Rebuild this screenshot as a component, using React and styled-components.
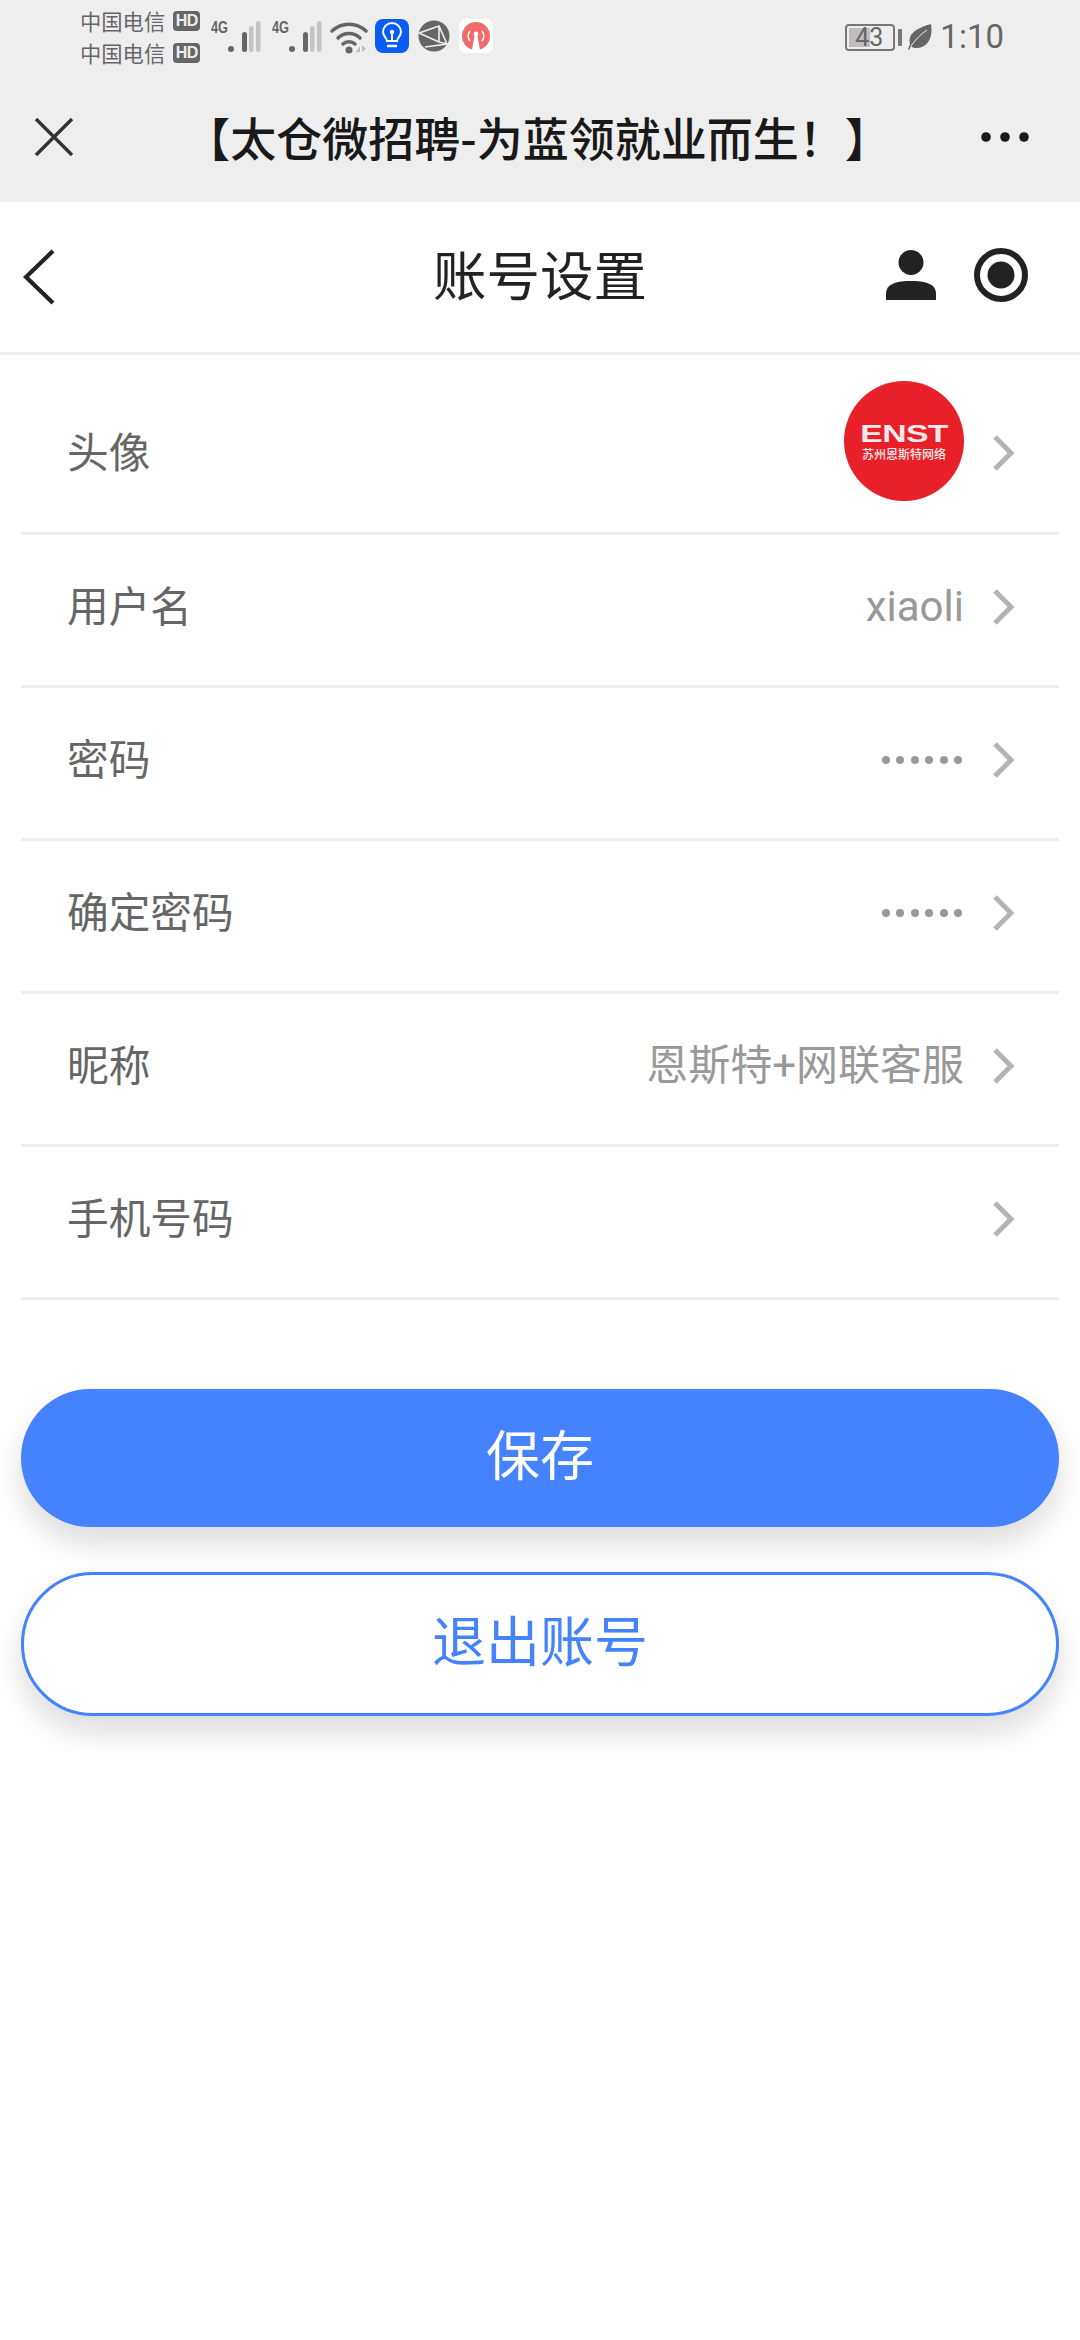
import styled, { createGlobalStyle } from "styled-components";

const CJK = `"Noto Sans CJK SC", "Noto Sans", sans-serif`;
const BLUE = "#4483fd";

const GlobalStyle = createGlobalStyle`
  html, body {
    margin: 0;
    padding: 0;
    background: #ffffff;
  }
  body {
    font-family: Roboto, ${CJK};
  }
  * {
    box-sizing: border-box;
  }
`;

const Page = styled.div`
  width: 1080px;
  height: 2340px;
  background: #ffffff;
  overflow: hidden;
`;

const Top = styled.div`
  height: 202px;
  background: #eeeeee;
`;

const StatusBar = styled.div`
  height: 70px;
  padding: 6px 76px 0 80px;
  display: flex;
  align-items: flex-start;
  justify-content: space-between;
  color: #666666;
`;

const StatusLeft = styled.div`
  display: flex;
  align-items: flex-start;
`;

const Carriers = styled.div`
  width: 131px;
  display: flex;
  flex-direction: column;
  gap: 2px;
`;

const Carrier = styled.div`
  height: 30px;
  display: flex;
  align-items: center;
  gap: 8px;
  font-family: ${CJK};
  font-size: 21.3px;
  line-height: 30px;
  white-space: nowrap;
`;

const HdBadge = styled.span`
  width: 27px;
  height: 20px;
  border-radius: 4px;
  background: #666666;
  color: #eeeeee;
  font-family: "Liberation Sans", sans-serif;
  font-size: 16px;
  font-weight: 700;
  line-height: 20px;
  text-align: center;
  letter-spacing: -0.5px;
`;

const Signal = styled.div`
  width: 50px;
  margin-left: ${(p) => p.$left}px;
  margin-top: 15px;
  height: 34px;
  display: flex;
  position: relative;
`;

const SignalLabel = styled.span`
  font-family: "Liberation Sans", sans-serif;
  font-weight: 700;
  font-size: 16px;
  line-height: 14px;
  transform: scaleX(0.8);
  transform-origin: left top;
  color: #666666;
`;

const SignalBars = styled.svg`
  position: absolute;
  right: 0;
  top: 0;
`;

const TrayIcon = styled.svg`
  display: block;
  flex: none;
  margin-left: ${(p) => p.$left}px;
  margin-top: ${(p) => p.$top}px;
`;

const StatusRight = styled.div`
  display: flex;
  align-items: center;
  padding-top: 13px;
`;

const Battery = styled.div`
  width: 50px;
  height: 27px;
  border: 2px solid #777777;
  border-radius: 4px;
  position: relative;
  overflow: hidden;
  font-family: Roboto, sans-serif;
  font-size: 25px;
  line-height: 24px;
  text-align: right;
  padding-right: 10px;
  color: #666666;
  &::before {
    content: "";
    position: absolute;
    left: 2px;
    top: 2px;
    bottom: 2px;
    width: 21px;
    background: #bdbdbd;
    z-index: 0;
  }
`;

const BatteryText = styled.span`
  position: relative;
`;

const BatteryCap = styled.div`
  width: 4px;
  height: 17px;
  border-radius: 1px;
  background: #777777;
  margin-left: 3px;
`;

const Clock = styled.div`
  margin-left: 8px;
  font-size: 33px;
  line-height: 36px;
  color: #666666;
`;

const TitleBar = styled.div`
  height: 132px;
  padding: 6px 51px 0 34px;
  margin-top: -2px;
  display: flex;
  align-items: center;
  justify-content: space-between;
`;

const TitleText = styled.div`
  font-family: ${CJK};
  font-size: 46px;
  line-height: 60px;
  font-weight: 500;
  color: #191919;
  white-space: nowrap;
  margin-left: 20px;
  margin-top: -3px;
`;

const NavBar = styled.div`
  height: 153px;
  border-bottom: 3px solid #eeeeee;
  padding: 0 22px;
  display: grid;
  grid-template-columns: 1fr auto 1fr;
  align-items: center;
`;

const NavTitle = styled.div`
  font-family: ${CJK};
  font-size: 53.5px;
  color: #222222;
  line-height: 72px;
  margin-bottom: 8px;
`;

const NavIcons = styled.div`
  display: flex;
  justify-content: flex-end;
  align-items: center;
  gap: 38px;
  padding-right: 30px;
  margin-bottom: 5px;
`;

const List = styled.div`
  padding: 0 21px;
`;

const Row = styled.div`
  height: ${(p) => p.$height}px;
  border-bottom: 3px solid #eeeeee;
  display: flex;
  align-items: center;
  justify-content: space-between;
  padding: 0 44px 0 46px;
`;

const RowLabel = styled.div`
  font-family: ${CJK};
  font-size: 41.7px;
  color: #666666;
  line-height: 60px;
  margin: ${(p) => p.$margin};
`;

const RowRight = styled.div`
  display: flex;
  align-items: center;
  gap: 27px;
  margin-bottom: ${(p) => p.$lift}px;
`;

const RowValue = styled.div`
  font-family: Roboto, ${CJK};
  font-size: 42px;
  line-height: 60px;
  color: #999999;
`;

const Dots = styled.div`
  display: flex;
  gap: 6.5px;
  padding-right: 2px;
`;

const Dot = styled.i`
  display: block;
  width: 8px;
  height: 8px;
  border-radius: 50%;
  background: #999999;
`;

const Avatar = styled.div`
  width: 120px;
  height: 120px;
  border-radius: 50%;
  background: #e8202a;
  color: #fbe9e9;
  display: flex;
  flex-direction: column;
  align-items: center;
  justify-content: center;
  padding-top: 2px;
`;

const AvatarBrand = styled.div`
  font-family: "Liberation Sans", sans-serif;
  font-size: 27px;
  font-weight: 700;
  line-height: 24px;
  letter-spacing: -0.5px;
  transform: scale(1.25, 0.88);
`;

const AvatarSub = styled.div`
  font-family: ${CJK};
  font-size: 12px;
  font-weight: 500;
  line-height: 16px;
  white-space: nowrap;
`;

const AvatarChevron = styled.div`
  display: flex;
  margin-top: 23px;
`;

const Actions = styled.div`
  padding: 89px 21px 0;
  display: flex;
  flex-direction: column;
  gap: 45px;
`;

const Button = styled.div`
  height: ${(p) => (p.$outline ? 144 : 138)}px;
  border-radius: 72px;
  background: ${(p) => (p.$outline ? "#ffffff" : BLUE)};
  border: ${(p) => (p.$outline ? `3px solid ${BLUE}` : "none")};
  color: ${(p) => (p.$outline ? BLUE : "#ffffff")};
  box-shadow: 0 16px 30px rgba(0, 0, 0, 0.14);
  font-family: ${CJK};
  font-size: 54px;
  padding-bottom: 12px;
  display: flex;
  align-items: center;
  justify-content: center;
`;

const Chevron = () => (
  <svg width="24" height="38" viewBox="0 0 24 38" fill="none">
    <path d="M4 3 L20 19 L4 35" stroke="#b4b4b4" strokeWidth="5" />
  </svg>
);

const SignalIcon = () => (
  <SignalBars width="33" height="34" viewBox="0 0 33 34">
    <circle cx="3" cy="28" r="3" fill="#666" />
    <rect x="14" y="11" width="5" height="20" rx="2.5" fill="#666" />
    <rect x="21" y="5" width="4.5" height="26" rx="2.2" fill="#c4c4c4" />
    <rect x="28" y="0" width="4.5" height="31" rx="2.2" fill="#c4c4c4" />
  </SignalBars>
);

const rows = [
  { label: "用户名", value: "xiaoli" },
  { label: "密码", dots: true },
  { label: "确定密码", dots: true },
  { label: "昵称", value: "恩斯特+网联客服" },
  { label: "手机号码" },
];

const App = () => (
  <Page>
    <GlobalStyle />
    <Top>
      <StatusBar>
        <StatusLeft>
          <Carriers>
            <Carrier>
              中国电信<HdBadge>HD</HdBadge>
            </Carrier>
            <Carrier>
              中国电信<HdBadge>HD</HdBadge>
            </Carrier>
          </Carriers>
          <Signal $left={0}>
            <SignalLabel>4G</SignalLabel>
            <SignalIcon />
          </Signal>
          <Signal $left={11}>
            <SignalLabel>4G</SignalLabel>
            <SignalIcon />
          </Signal>
          <TrayIcon $left={8} $top={15} width="38" height="34" viewBox="0 0 38 34" fill="none">
            <path d="M2 10 C12 1 26 1 36 10" stroke="#666" strokeWidth="3.5" strokeLinecap="round" />
            <path d="M8 17 C14 11 24 11 30 17" stroke="#666" strokeWidth="3.5" strokeLinecap="round" />
            <path d="M13 23 C16 20 22 20 25 23" stroke="#666" strokeWidth="3.5" strokeLinecap="round" />
            <circle cx="19" cy="29" r="3.5" fill="#666" />
            <path d="M26 31 L30 25 V31 Z M32 24 L36 28 L32 31 Z" fill="#bbb" />
          </TrayIcon>
          <TrayIcon $left={7} $top={13} width="34" height="34" viewBox="0 0 34 34" fill="none">
            <rect width="34" height="34" rx="8" fill="#0a5cf5" />
            <path d="M12 22 C12 19 8 17.5 8 13 A9 9 0 0 1 26 13 C26 17.5 22 19 22 22 Z" stroke="#fff" strokeWidth="2" />
            <path d="M13 27 H21" stroke="#fff" strokeWidth="2.4" strokeLinecap="round" />
            <path d="M17 22 V14" stroke="#fff" strokeWidth="2" />
            <circle cx="17" cy="13" r="2.2" fill="#fff" />
          </TrayIcon>
          <TrayIcon $left={9} $top={14} width="32" height="32" viewBox="0 0 32 32" fill="none">
            <circle cx="16" cy="16" r="15.5" fill="#666" />
            <path d="M1 13 L21 6 L29 24 L7 27 M1 13 L21 22 M21 6 L21 22 L29 24" stroke="#eee" strokeWidth="1.6" />
          </TrayIcon>
          <TrayIcon $left={9} $top={13} width="34" height="34" viewBox="0 0 34 34" fill="none">
            <rect width="34" height="34" rx="7" fill="#fff" />
            <circle cx="17" cy="17" r="14" fill="#f26a6a" />
            <path d="M11 22 A8 8 0 0 1 11 12 M23 22 A8 8 0 0 0 23 12" stroke="#fff" strokeWidth="1.6" />
            <circle cx="17" cy="15" r="2.4" fill="#fff" />
            <path d="M15.5 17 H18.5 L21 31 H13 Z" fill="#fff" />
          </TrayIcon>
        </StatusLeft>
        <StatusRight>
          <Battery>
            <BatteryText>43</BatteryText>
          </Battery>
          <BatteryCap />
          <TrayIcon $left={6} $top={0} width="24" height="26" viewBox="0 0 24 26">
            <path d="M23 0 C25 12 21 24 8 24 C6 24 4 23.5 3 22 L1 26 L0 25 L2 20 C-1 9 10 4 23 0 Z" fill="#666" />
            <path d="M3 22 C8 15 13 10 19 6" stroke="#eee" strokeWidth="1" fill="none" />
          </TrayIcon>
          <Clock>1:10</Clock>
        </StatusRight>
      </StatusBar>
      <TitleBar>
        <svg width="40" height="40" viewBox="0 0 40 40" fill="none">
          <path d="M2 2 L38 38 M38 2 L2 38" stroke="#333" strokeWidth="3.4" />
        </svg>
        <TitleText>【太仓微招聘-为蓝领就业而生！】</TitleText>
        <svg width="48" height="10" viewBox="0 0 48 10" fill="#191919">
          <circle cx="5" cy="5" r="4.8" />
          <circle cx="24" cy="5" r="4.8" />
          <circle cx="43" cy="5" r="4.8" />
        </svg>
      </TitleBar>
    </Top>

    <NavBar>
      <svg width="34" height="56" viewBox="0 0 34 56" fill="none">
        <path d="M31 2 L4 28 L31 54" stroke="#222" strokeWidth="4.2" />
      </svg>
      <NavTitle>账号设置</NavTitle>
      <NavIcons>
        <svg width="50" height="50" viewBox="0 0 50 50" fill="#222">
          <circle cx="25" cy="12.5" r="12.5" />
          <path d="M0 50 V44 C0 33 12 31 25 31 C38 31 50 33 50 44 V50 Z" />
        </svg>
        <svg width="54" height="54" viewBox="0 0 54 54" fill="none">
          <circle cx="27" cy="27" r="24" stroke="#222" strokeWidth="6" />
          <circle cx="27" cy="27" r="13.5" fill="#222" />
        </svg>
      </NavIcons>
    </NavBar>

    <List>
      <Row $height={180}>
        <RowLabel $margin="12px 0 0">头像</RowLabel>
        <RowRight $lift={5}>
          <Avatar>
            <AvatarBrand>ENST</AvatarBrand>
            <AvatarSub>苏州恩斯特网络</AvatarSub>
          </Avatar>
          <AvatarChevron>
            <Chevron />
          </AvatarChevron>
        </RowRight>
      </Row>
      {rows.map((row) => (
        <Row key={row.label} $height={153}>
          <RowLabel $margin="0 0 13px">{row.label}</RowLabel>
          <RowRight $lift={6}>
            {row.value && <RowValue>{row.value}</RowValue>}
            {row.dots && (
              <Dots>
                {[0, 1, 2, 3, 4, 5].map((n) => (
                  <Dot key={n} />
                ))}
              </Dots>
            )}
            <Chevron />
          </RowRight>
        </Row>
      ))}
    </List>

    <Actions>
      <Button>保存</Button>
      <Button $outline>退出账号</Button>
    </Actions>
  </Page>
);

export default App;
